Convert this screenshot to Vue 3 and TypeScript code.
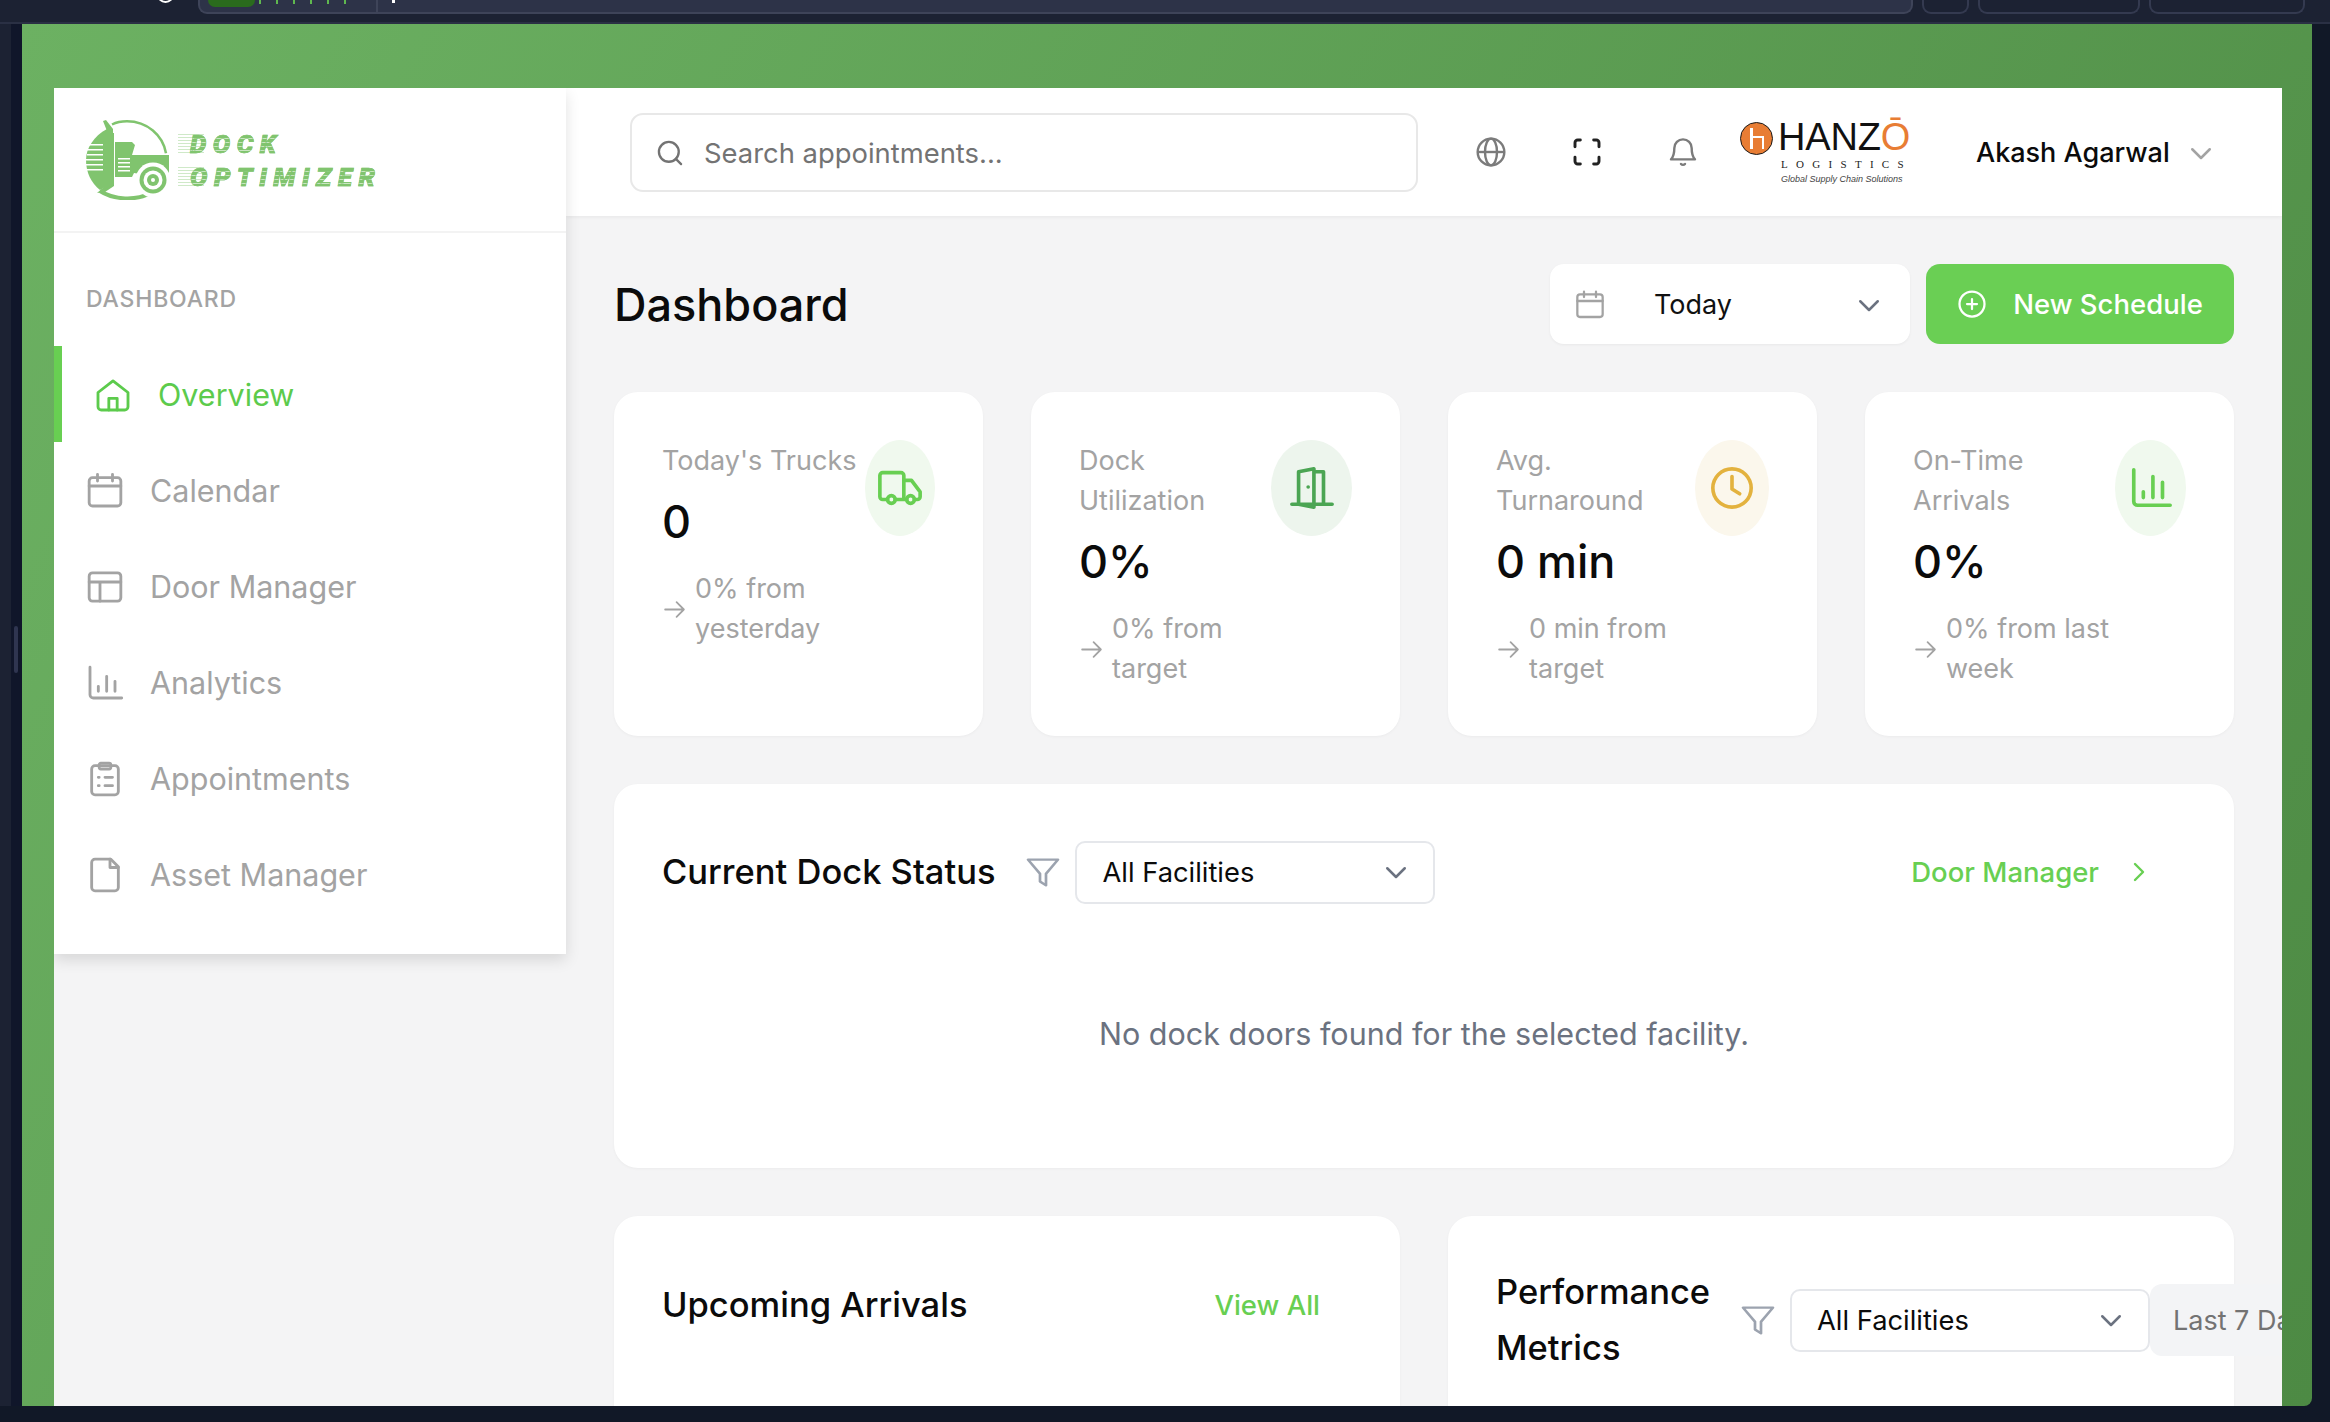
<script setup lang="ts">
type Stat = {
  label: string;
  value: string;
  note: string;
  tone: string;
  pill: number;
  icon: string;
};

const stats: Stat[] = [
  { label: "Today's Trucks", value: "0", note: "0% from yesterday", tone: "green", pill: 70, icon: "truck" },
  { label: "Dock Utilization", value: "0%", note: "0% from target", tone: "dark", pill: 81, icon: "door" },
  { label: "Avg. Turnaround", value: "0 min", note: "0 min from target", tone: "amber", pill: 74, icon: "clock" },
  { label: "On-Time Arrivals", value: "0%", note: "0% from last week", tone: "green", pill: 71, icon: "chart" },
];

const nav = [
  { label: "Overview", icon: "home", active: true },
  { label: "Calendar", icon: "calendar", active: false },
  { label: "Door Manager", icon: "layout", active: false },
  { label: "Analytics", icon: "chart", active: false },
  { label: "Appointments", icon: "clipboard", active: false },
  { label: "Asset Manager", icon: "file", active: false },
];
</script>

<template>
  <div class="screen">
    <div class="chrome">
      <span class="chrome__ring"></span>
      <div class="chrome__url">
        <span class="chrome__pill"></span>
        <span class="chrome__frag"></span>
        <span class="chrome__sep"></span>
        <span class="chrome__tick"></span>
      </div>
      <span class="chrome__tab chrome__tab--s"></span>
      <span class="chrome__tab chrome__tab--m"></span>
      <span class="chrome__tab chrome__tab--l"></span>
    </div>

    <div class="stage">
      <div class="rail"><span class="rail__handle"></span></div>

      <div class="backdrop">
        <div class="app">
          <aside class="sidebar">
            <div class="brand">
              <svg class="brand__mark" viewBox="0 0 83 80">
                <g fill="none" stroke="#80c46e">
                  <path stroke-width="2.500" d="M26 4.500C31 2 36 1.300 41 1.300c20 0 36 14 39 32" />
                  <path stroke-width="4" d="M14 71c14 9 36 10 50 2" />
                </g>
                <g fill="#80c46e">
                  <path d="M21 9C8 16 0 28 0 40c0 12 5 23 14 30l7-4z" />
                  <path d="M17 1l3-1 7 9v4h1v53l-9 6-8 1 8-7V13l2-2z" />
                  <path d="M29 22h17l3 3-3 10h37v23h-5L48 53l-2 4H29z" />
                </g>
                <g fill="#fff">
                  <path d="M2 24h15v1.500H2zM1 29h16v1.500H1zM1 34h16v1.500H1zM0 39h17v1.500H0zM0 44h17v1.500H0zM1 49h16v1.500H1z" />
                  <path d="M32 38h12v1.500H32zM32 42h12v1.500H32zM32 46h12v1.500H32zM32 50h12v1.500H32z" />
                  <circle cx="67" cy="60" r="17.500" />
                </g>
                <circle cx="67" cy="60" r="13.500" fill="#80c46e" />
                <circle cx="67" cy="60" r="9.500" fill="#fff" />
                <circle cx="67" cy="60" r="6" fill="#80c46e" />
                <circle cx="67" cy="60" r="2" fill="#fff" />
              </svg>
              <div class="brand__word">
                <span>DOCK</span>
                <span>OPTIMIZER</span>
              </div>
            </div>

            <div class="sidebar__caption">DASHBOARD</div>

            <nav>
              <div v-for="item in nav" :key="item.label" class="nav-item" :class="{ 'is-active': item.active }">
                <svg class="nav-item__icon" viewBox="0 0 24 24" fill="none" stroke="currentColor" stroke-width="1.700" stroke-linecap="round" stroke-linejoin="round">
                  <template v-if="item.icon === 'home'">
                    <path d="M3 10.500 12 3.500l9 7V19a2 2 0 0 1-2 2H5a2 2 0 0 1-2-2z" />
                    <path d="M9.500 21v-7h5v7" />
                  </template>
                  <template v-else-if="item.icon === 'calendar'">
                    <rect x="2.500" y="4" width="19" height="17" rx="2" />
                    <path d="M2.500 9h19M7.500 2v4M16.500 2v4" />
                  </template>
                  <template v-else-if="item.icon === 'layout'">
                    <rect x="2.500" y="3.500" width="19" height="17" rx="2" />
                    <path d="M2.500 9h19M9 9v11.500" />
                  </template>
                  <template v-else-if="item.icon === 'chart'">
                    <path d="M3 2.500V19a2 2 0 0 0 2 2h17" />
                    <path d="M8 17v-3M13 17V8M18 17v-6" />
                  </template>
                  <template v-else-if="item.icon === 'clipboard'">
                    <rect x="4" y="4" width="16" height="17.500" rx="2" />
                    <rect x="8.500" y="2.500" width="7" height="3.500" rx="1" />
                    <path d="M8 11h.5M12 11h4.500M8 16h.5M12 16h4.500" />
                  </template>
                  <template v-else>
                    <path d="M6 2.500h9.500L20 7v12.500a2 2 0 0 1-2 2H6a2 2 0 0 1-2-2v-15a2 2 0 0 1 2-2z" />
                    <path d="M15 2.500V7.500h5" />
                  </template>
                </svg>
                <span>{{ item.label }}</span>
              </div>
            </nav>
          </aside>

          <div class="main">
            <header class="topbar">
              <div class="search">
                <svg class="search__icon" viewBox="0 0 24 24" fill="none" stroke="currentColor" stroke-width="2" stroke-linecap="round">
                  <circle cx="11" cy="11" r="8.500" />
                  <path d="m21.500 21.500-4.500-4.500" />
                </svg>
                <span>Search appointments...</span>
              </div>

              <div class="tool">
                <svg viewBox="0 0 24 24" fill="none" stroke="#7b7b7b" stroke-width="1.800">
                  <circle cx="12" cy="12" r="10" />
                  <ellipse cx="12" cy="12" rx="4.500" ry="10" />
                  <path d="M2 12h20" />
                </svg>
              </div>
              <div class="tool">
                <svg viewBox="0 0 24 24" fill="none" stroke="#222" stroke-width="2.200" stroke-linecap="round" stroke-linejoin="round">
                  <path d="M3 8V5a2 2 0 0 1 2-2h2M17 3h2a2 2 0 0 1 2 2v3M21 16v3a2 2 0 0 1-2 2h-2M7 21H5a2 2 0 0 1-2-2v-3" />
                </svg>
              </div>
              <div class="tool">
                <svg viewBox="0 0 24 24" fill="none" stroke="#7b7b7b" stroke-width="1.800" stroke-linecap="round" stroke-linejoin="round">
                  <path d="M12 2.500a6.500 6.500 0 0 0-6.500 6.500c0 6-2.500 8.500-2.500 8.500h18s-2.500-2.500-2.500-8.500A6.500 6.500 0 0 0 12 2.500z" />
                  <path d="M10.500 21a2 2 0 0 0 3 0" />
                </svg>
              </div>

              <div class="hanzo">
                <div class="hanzo__seal"><span class="hanzo__h"></span><span class="hanzo__i"></span></div>
                <div class="hanzo__text">
                  <div class="hanzo__name">HANZ<em>Ō</em></div>
                  <div class="hanzo__sub">LOGISTICS</div>
                  <div class="hanzo__tag">Global Supply Chain Solutions</div>
                </div>
              </div>

              <div class="user">
                <span>Akash Agarwal</span>
                <svg class="chev chev--light" viewBox="0 0 24 24" fill="none" stroke="currentColor" stroke-width="2" stroke-linecap="round" stroke-linejoin="round">
                  <path d="m5 9 7 7 7-7" />
                </svg>
              </div>
            </header>

            <main class="content">
              <div class="page-head">
                <h1>Dashboard</h1>
                <div class="range">
                  <svg class="range__icon" viewBox="0 0 24 24" fill="none" stroke="currentColor" stroke-width="1.700" stroke-linecap="round">
                    <rect x="2.500" y="4" width="19" height="17" rx="2" />
                    <path d="M2.500 9h19M7.500 2v4M16.500 2v4" />
                  </svg>
                  <span class="range__text">Today</span>
                  <svg class="chev" viewBox="0 0 24 24" fill="none" stroke="currentColor" stroke-width="2" stroke-linecap="round" stroke-linejoin="round">
                    <path d="m5 9 7 7 7-7" />
                  </svg>
                </div>
                <button class="cta" type="button">
                  <svg viewBox="0 0 24 24" fill="none" stroke="currentColor" stroke-width="1.800" stroke-linecap="round">
                    <circle cx="12" cy="12" r="10" />
                    <path d="M12 8v8M8 12h8" />
                  </svg>
                  New Schedule
                </button>
              </div>

              <div class="stats">
                <div v-for="s in stats" :key="s.label" class="stat">
                  <div class="stat__body">
                    <div class="stat__label">{{ s.label }}</div>
                    <div class="stat__value">{{ s.value }}</div>
                    <div class="stat__note">
                      <svg viewBox="0 0 24 24" fill="none" stroke="currentColor" stroke-width="1.700" stroke-linecap="round" stroke-linejoin="round">
                        <path d="M3 12h18M14 5l7 7-7 7" />
                      </svg>
                      <span>{{ s.note }}</span>
                    </div>
                  </div>
                  <div class="stat__pill" :class="`tone-${s.tone}`" :style="{ width: s.pill + 'px' }">
                    <svg viewBox="0 0 24 24" fill="none" stroke="currentColor" stroke-width="1.900" stroke-linecap="round" stroke-linejoin="round">
                      <template v-if="s.icon === 'truck'">
                        <path d="M5.500 18H3a1.500 1.500 0 0 1-1.500-1.500v-11A1.500 1.500 0 0 1 3 4h9.500A1.500 1.500 0 0 1 14 5.500V18H9.500M14 8h4l4.500 6v2.500A1.500 1.500 0 0 1 21 18h-1.500M14 18h1.500" />
                        <circle cx="7.500" cy="18" r="2" />
                        <circle cx="17.500" cy="18" r="2" />
                      </template>
                      <template v-else-if="s.icon === 'door'">
                        <path d="M1.500 20.500h21M5 20.500V3.500L13 2v20l-8-1.500M13 3.500h5v17" />
                        <path d="M10 11.500h.01" />
                      </template>
                      <template v-else-if="s.icon === 'clock'">
                        <circle cx="12" cy="12" r="10" />
                        <path d="M12 6v6.500l4 2.500" />
                      </template>
                      <template v-else>
                        <path d="M3 2.500V19a2 2 0 0 0 2 2h17" />
                        <path d="M8 17v-3M13 17V6M18 17v-8" />
                      </template>
                    </svg>
                  </div>
                </div>
              </div>

              <section class="panel panel--dock">
                <div class="panel__head">
                  <h2>Current Dock Status</h2>
                  <svg class="funnel" viewBox="0 0 24 24" preserveAspectRatio="none" fill="none" stroke="currentColor" stroke-width="1.800" stroke-linejoin="round">
                    <path d="M2 2h20l-8 11v9l-4-3v-6z" />
                  </svg>
                  <div class="facility">
                    <span>All Facilities</span>
                    <svg class="chev" viewBox="0 0 24 24" fill="none" stroke="currentColor" stroke-width="2" stroke-linecap="round" stroke-linejoin="round">
                      <path d="m5 9 7 7 7-7" />
                    </svg>
                  </div>
                  <a class="link link--door">
                    Door Manager
                    <svg viewBox="0 0 24 24" fill="none" stroke="currentColor" stroke-width="2.400" stroke-linecap="round" stroke-linejoin="round">
                      <path d="m8 4 8 8-8 8" />
                    </svg>
                  </a>
                </div>
                <p class="panel__empty">No dock doors found for the selected facility.</p>
              </section>

              <div class="lower">
                <section class="panel">
                  <div class="panel__head panel__head--arrivals">
                    <h2>Upcoming Arrivals</h2>
                    <a class="link">View All</a>
                  </div>
                </section>
                <section class="panel">
                  <div class="panel__head panel__head--perf">
                    <h2>Performance Metrics</h2>
                    <svg class="funnel" viewBox="0 0 24 24" preserveAspectRatio="none" fill="none" stroke="currentColor" stroke-width="1.800" stroke-linejoin="round">
                      <path d="M2 2h20l-8 11v9l-4-3v-6z" />
                    </svg>
                    <div class="facility">
                      <span>All Facilities</span>
                      <svg class="chev" viewBox="0 0 24 24" fill="none" stroke="currentColor" stroke-width="2" stroke-linecap="round" stroke-linejoin="round">
                        <path d="m5 9 7 7 7-7" />
                      </svg>
                    </div>
                    <div class="period">Last 7 Days</div>
                  </div>
                </section>
              </div>
            </main>
          </div>
        </div>
      </div>

      <div class="rail rail--right"></div>
    </div>
    <div class="floor"></div>
  </div>
</template>

<style>
html,
body {
  margin: 0;
  background: #111827;
}
</style>

<style scoped>
* {
  box-sizing: border-box;
}

.screen {
  width: 2330px;
  height: 1422px;
  overflow: hidden;
  display: flex;
  flex-direction: column;
  background: #111827;
  font-family: Inter, "Liberation Sans", sans-serif;
  color: #0b0b0b;
}

/* browser bar, only its lower edge is in the shot */
.chrome {
  flex: 0 0 24px;
  display: flex;
  align-items: flex-start;
  gap: 9px;
  padding-left: 198px;
  background: #1c2233;
  border-bottom: 2px solid #2a3044;
  position: relative;
}
.chrome__ring {
  position: absolute;
  left: 157px;
  top: -14px;
  width: 17px;
  height: 17px;
  border: 2px solid #fff;
  border-radius: 50%;
}
.chrome__url {
  width: 1715px;
  height: 14px;
  background: #2d3348;
  border: 2px solid #3e4459;
  border-top: 0;
  border-radius: 0 0 9px 9px;
  padding-left: 8px;
  display: flex;
  align-items: flex-start;
}
.chrome__pill {
  display: block;
  width: 47px;
  height: 7px;
  background: #2a6b1d;
  border-radius: 0 0 8px 8px;
}
.chrome__frag {
  width: 100px;
  height: 4px;
  margin-left: 4px;
  background: repeating-linear-gradient(90deg, #5fb84f 0 2px, transparent 2px 17px);
}
.chrome__sep {
  width: 2px;
  height: 12px;
  margin-left: 17px;
  background: #3e4459;
}
.chrome__tick {
  width: 3px;
  height: 3px;
  margin-left: 14px;
  background: #fff;
}
.chrome__tab {
  height: 14px;
  border: 2px solid #343a50;
  border-top: 0;
  border-radius: 0 0 9px 9px;
}
.chrome__tab--s {
  width: 47px;
}
.chrome__tab--m {
  width: 162px;
}
.chrome__tab--l {
  width: 156px;
}

.stage {
  flex: 1;
  display: flex;
  min-height: 0;
}
.rail {
  flex: 0 0 22px;
  background: linear-gradient(90deg, #1c2233 50%, #10162a 50%);
  position: relative;
}
.rail__handle {
  position: absolute;
  left: 14px;
  top: 602px;
  width: 4px;
  height: 47px;
  border-radius: 2px;
  background: #2f3550;
}
.rail--right {
  flex-basis: 18px;
  background: #111827;
}
.floor {
  flex: 0 0 16px;
  background: #111827;
}

.backdrop {
  flex: 1;
  min-width: 0;
  padding: 64px 30px 0 32px;
  background: linear-gradient(120deg, #6cb162 0%, #4d8a44 100%);
  border-radius: 0 0 8px 0;
}
.app {
  height: 100%;
  display: flex;
  align-items: flex-start;
  background: #f4f4f5;
  overflow: hidden;
}

.sidebar {
  flex: 0 0 512px;
  height: 866px;
  background: #fff;
  box-shadow: 0 6px 14px rgba(0, 0, 0, 0.12);
  position: relative;
  z-index: 2;
}
.brand {
  height: 145px;
  display: flex;
  align-items: flex-start;
  padding: 32px 0 0 32px;
  border-bottom: 2px solid #f3f3f3;
}
.brand__mark {
  width: 83px;
  height: 80px;
  flex: none;
}
.brand__word {
  margin: 11px 0 0 21px;
  display: flex;
  flex-direction: column;
  gap: 7px;
  font-family: Roboto, "Liberation Sans", sans-serif;
  font-size: 26px;
  line-height: 26px;
  font-weight: 900;
  font-style: italic;
  letter-spacing: 6.500px;
  -webkit-text-stroke: 0.600px #80c46e;
}
.brand__word span {
  color: transparent;
  width: fit-content;
  background: repeating-linear-gradient(180deg, #80c46e 0 3px, #c9e6c1 3px 4px);
  -webkit-background-clip: text;
  background-clip: text;
  position: relative;
}
.brand__word span::before {
  content: "";
  position: absolute;
  left: -12px;
  width: 26px;
  top: 3px;
  height: 20px;
  background: repeating-linear-gradient(180deg, #cfe9c8 0 1px, transparent 1px 3px);
  z-index: -1;
}

.sidebar__caption {
  margin: 51px 0 0 32px;
  font-size: 23px;
  line-height: 30px;
  font-weight: 500;
  color: #a3a3a3;
  letter-spacing: 0.800px;
}
nav {
  margin-top: 32px;
}
.nav-item {
  height: 96px;
  display: flex;
  align-items: center;
  gap: 25px;
  padding: 1px 0 0 31px;
  font-size: 30.500px;
  color: #a3a3a3;
}
.nav-item__icon {
  width: 40px;
  height: 40px;
  flex: none;
}
.nav-item.is-active {
  color: #5ccb4c;
  border-left: 8px solid #68cf52;
}

.main {
  flex: 1;
  min-width: 0;
  height: 100%;
  overflow: hidden;
  position: relative;
}
.topbar {
  height: 128px;
  display: flex;
  align-items: center;
  padding-left: 64px;
  background: #fff;
  box-shadow: 0 1px 4px rgba(0, 0, 0, 0.06);
  position: relative;
  z-index: 1;
}
.search {
  width: 788px;
  height: 79px;
  margin-right: 25px;
  display: flex;
  align-items: center;
  gap: 20px;
  padding: 1px 0 0 24px;
  border: 2px solid #e8e8e8;
  border-radius: 13px;
  font-size: 27.400px;
  color: #737373;
}
.search__icon {
  width: 28px;
  height: 28px;
}
.tool {
  width: 96px;
  display: flex;
  justify-content: center;
}
.tool svg {
  width: 32px;
  height: 32px;
}

.hanzo {
  width: 176px;
  margin-left: 7px;
  height: 66px;
  display: flex;
  align-items: flex-start;
  gap: 5px;
}
.hanzo__seal {
  width: 33px;
  height: 33px;
  margin: 3px 0 0 2px;
  flex: none;
  border-radius: 50%;
  background: #e87d34;
  border: 1.500px solid #1a1a1a;
  position: relative;
}
.hanzo__h,
.hanzo__i {
  position: absolute;
}
.hanzo__h {
  left: 9px;
  top: 5px;
  width: 3px;
  height: 21px;
  background: #fff;
}
.hanzo__i {
  left: 9px;
  top: 13px;
  width: 14px;
  height: 13px;
  border: 2.500px solid #fff;
  border-bottom: 0;
}
.hanzo__text {
  width: 127px;
}
.hanzo__name {
  font-family: "Liberation Sans", sans-serif;
  font-size: 38px;
  line-height: 38px;
  letter-spacing: -0.200px;
  margin-top: -1px;
  color: #111;
  white-space: nowrap;
}
.hanzo__name em {
  font-style: normal;
  color: #e87d34;
}
.hanzo__sub {
  font-family: "Liberation Serif", serif;
  font-size: 11px;
  line-height: 12px;
  margin: 2px 0 0 3px;
  letter-spacing: 8.300px;
  color: #222;
  white-space: nowrap;
}
.hanzo__tag {
  font-family: "Liberation Sans", sans-serif;
  font-size: 9px;
  line-height: 12px;
  margin: 3px 0 0 3px;
  font-style: italic;
  color: #444;
  white-space: nowrap;
}

.user {
  margin-left: 62px;
  padding-top: 1px;
  display: flex;
  align-items: center;
  gap: 16px;
  font-size: 27px;
  font-weight: 500;
  white-space: nowrap;
}
.chev {
  width: 30px;
  height: 30px;
  flex: none;
  color: #6b7280;
}
.chev--light {
  color: #a3a3a3;
}

.content {
  padding: 48px 48px 0;
}
.page-head {
  height: 80px;
  display: flex;
  align-items: center;
}
h1 {
  margin: 0 auto 0 0;
  font-size: 45px;
  font-weight: 500;
}
.range {
  width: 360px;
  height: 80px;
  display: flex;
  align-items: center;
  padding: 1px 26px 0 24px;
  background: #fff;
  border-radius: 14px;
  box-shadow: 0 1px 3px rgba(0, 0, 0, 0.05);
  font-size: 27px;
  color: #a3a3a3;
}
.range__icon {
  width: 32px;
  height: 32px;
  margin-right: 48px;
}
.range__text {
  color: #111;
  margin-right: auto;
}
.cta {
  width: 308px;
  height: 80px;
  margin-left: 16px;
  padding-top: 1px;
  display: flex;
  align-items: center;
  justify-content: center;
  gap: 26px;
  border: 0;
  border-radius: 14px;
  background: #6acf54;
  color: #fff;
  font: 500 27.500px Inter, "Liberation Sans", sans-serif;
}
.cta svg {
  width: 30px;
  height: 30px;
}

.stats {
  margin-top: 48px;
  display: grid;
  grid-template-columns: repeat(4, 369px);
  gap: 48px;
}
.stat,
.panel {
  background: #fff;
  border-radius: 24px;
  box-shadow: 0 1px 3px rgba(0, 0, 0, 0.04);
}
.stat {
  height: 344px;
  padding: 48px;
  display: flex;
  align-items: flex-start;
}
.stat__body {
  flex: 1;
  min-width: 0;
}
.stat__label {
  padding-top: 1px;
  font-size: 27px;
  line-height: 40px;
  color: #a3a3a3;
}
.stat__value {
  margin-top: 13px;
  font-size: 45px;
  line-height: 56px;
  font-weight: 500;
}
.stat__pill {
  height: 96px;
  flex: none;
  display: flex;
  align-items: center;
  justify-content: center;
  border-radius: 50%;
}
.stat__pill svg {
  width: 46px;
  height: 46px;
}
.tone-green {
  background: #f0f9ee;
  color: #68cf52;
}
.tone-dark {
  background: #edf5ed;
  color: #4ba553;
}
.tone-amber {
  background: #fbf7ec;
  color: #e3b23e;
}
.stat__note {
  margin-top: 19px;
  display: flex;
  align-items: center;
  gap: 8px;
  font-size: 27px;
  line-height: 40px;
  color: #a3a3a3;
}
.stat__note svg {
  width: 25px;
  height: 25px;
  flex: none;
}

.panel--dock {
  margin-top: 48px;
  height: 384px;
  padding: 48px;
}
.panel__head {
  display: flex;
  align-items: center;
  min-height: 80px;
}
h2 {
  margin: 0;
  font-size: 34.500px;
  line-height: 56px;
  font-weight: 500;
}
.funnel {
  width: 36px;
  height: 31px;
  margin-left: 30px;
  flex: none;
  color: #9ca3af;
}
.facility {
  width: 360px;
  height: 63px;
  margin-left: 14px;
  flex: none;
  display: flex;
  align-items: center;
  justify-content: space-between;
  padding: 0 22px 0 25px;
  border: 2px solid #e5e7eb;
  border-radius: 10px;
  background: #fff;
  font-size: 27.300px;
}
.link {
  color: #68cf52;
  font-size: 27.500px;
  font-weight: 500;
  display: flex;
  align-items: center;
}
.link--door {
  margin-left: auto;
  gap: 28px;
  padding-right: 35px;
}
.link svg {
  width: 24px;
  height: 24px;
}
.panel__empty {
  margin: 102px 0 0;
  text-align: center;
  font-size: 30.500px;
  line-height: 40px;
  color: #6b7280;
}
.lower {
  margin-top: 48px;
  display: grid;
  grid-template-columns: 786px 786px;
  gap: 48px;
}
.lower .panel {
  height: 400px;
  padding: 48px;
}
.panel__head--arrivals {
  min-height: 82px;
  justify-content: space-between;
  padding-right: 32px;
}
.panel__head--perf {
  min-height: 112px;
  width: 1000px;
}
.panel__head--perf h2 {
  width: 214px;
}
.period {
  width: 200px;
  height: 72px;
  display: flex;
  align-items: center;
  padding-left: 23px;
  flex: none;
  background: #f3f4f6;
  border-radius: 12px 0 0 12px;
  font-size: 27px;
  color: #737373;
  white-space: nowrap;
}
</style>
